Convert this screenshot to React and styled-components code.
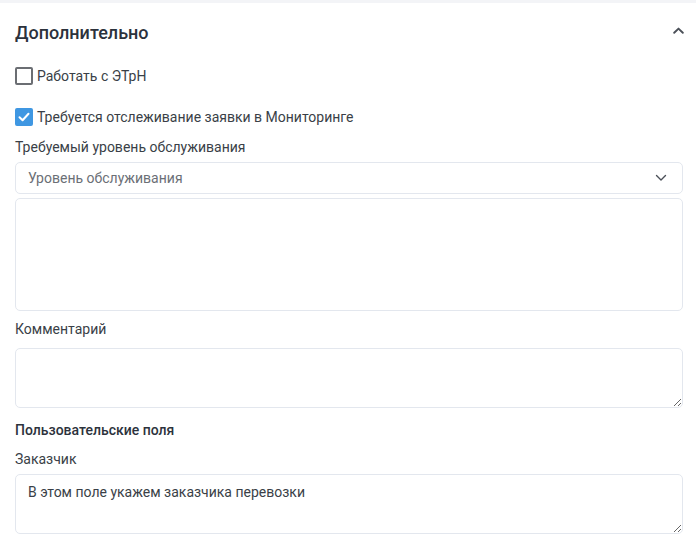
import styled, { createGlobalStyle } from "styled-components";

const GlobalStyle = createGlobalStyle`
    body {
        margin: 0;
        background: #f3f4f7;
        font-family: Roboto, "Noto Sans", sans-serif;
        color: #333a45;
    }
`;

const ChevronUp = () => (
    <svg width="11" height="7" viewBox="0 0 11 7" fill="none">
        <path d="M1.2 5.8L5.5 1.6L9.8 5.8" stroke="#4b5058" strokeWidth="1.9" strokeLinecap="round" strokeLinejoin="round"/>
    </svg>
);

const ChevronDown = () => (
    <svg width="12" height="8" viewBox="0 0 12 8" fill="none">
        <path d="M1.5 1.5L6 6L10.5 1.5" stroke="#4b5058" strokeWidth="1.4" strokeLinecap="round" strokeLinejoin="round"/>
    </svg>
);

const Check = () => (
    <svg width="14" height="14" viewBox="0 0 14 14" fill="none">
        <path d="M2.5 7.2L5.6 10.2L11.5 3.8" stroke="#fff" strokeWidth="2" strokeLinecap="round" strokeLinejoin="round"/>
    </svg>
);

export default function App() {
    return (
        <>
            <GlobalStyle/>
            <Card>
                <Header>
                    <Title>Дополнительно</Title>
                    <Toggle><ChevronUp/></Toggle>
                </Header>
                <CheckRow>
                    <Box/>
                    Работать с ЭТрН
                </CheckRow>
                <CheckRow $top={17}>
                    <Box $checked><Check/></Box>
                    Требуется отслеживание заявки в Мониторинге
                </CheckRow>
                <Label $top={8}>Требуемый уровень обслуживания</Label>
                <Select>
                    <Placeholder>Уровень обслуживания</Placeholder>
                    <ChevronDown/>
                </Select>
                <EmptyPanel/>
                <Label $top={8}>Комментарий</Label>
                <TextArea $top={9}/>
                <SectionTitle>Пользовательские поля</SectionTitle>
                <Label $top={9}>Заказчик</Label>
                <TextArea $top={5} defaultValue="В этом поле укажем заказчика перевозки"/>
            </Card>
        </>
    );
}

const Card = styled.div`
    margin-top: 3px;
    background: #fff;
    padding: 0 13px 18px 15px;
    display: flex;
    flex-direction: column;
`;

const Header = styled.div`
    height: 61px;
    display: flex;
    align-items: center;
    justify-content: space-between;
`;

const Title = styled.h2`
    margin: 0 0 2px;
    font-size: 18px;
    font-weight: 500;
    color: #2c323c;
`;

const Toggle = styled.span`
    display: flex;
    margin: 0 -1px 7px 0;
`;

const CheckRow = styled.label`
    margin-top: ${p => p.$top || 0}px;
    height: 24px;
    display: flex;
    align-items: center;
    gap: 4px;
    font-size: 14px;
    color: #3a3f47;
`;

const Box = styled.span`
    box-sizing: border-box;
    width: 18px;
    height: 18px;
    border-radius: 2px;
    border: 2px solid ${p => p.$checked ? "#3f97e2" : "#6b6e73"};
    background: ${p => p.$checked ? "#3f97e2" : "#fff"};
    display: flex;
    align-items: center;
    justify-content: center;
`;

const Label = styled.div`
    margin-top: ${p => p.$top || 0}px;
    line-height: 20px;
    font-size: 14px;
    color: #3a3f47;
`;

const SectionTitle = styled(Label)`
    margin-top: 12px;
    font-weight: 500;
    color: #2c323c;
`;

const Select = styled.div`
    box-sizing: border-box;
    margin-top: 5px;
    height: 32px;
    border: 1px solid #e3e7ee;
    border-radius: 5px;
    display: flex;
    align-items: center;
    justify-content: space-between;
    padding: 0 15px 0 12px;
`;

const Placeholder = styled.span`
    font-size: 14px;
    color: #6b6f76;
`;

const EmptyPanel = styled.div`
    box-sizing: border-box;
    margin-top: 4px;
    height: 113px;
    border: 1px solid #e3e7ee;
    border-radius: 5px;
`;

const TextArea = styled.textarea`
    box-sizing: border-box;
    margin-top: ${p => p.$top || 0}px;
    height: 60px;
    width: 100%;
    border: 1px solid #e3e7ee;
    border-radius: 5px;
    padding: 7px 12px;
    font-family: Roboto, "Noto Sans", sans-serif;
    font-size: 14px;
    line-height: 20px;
    color: #3a3f47;
    resize: vertical;
    outline: none;
`;
